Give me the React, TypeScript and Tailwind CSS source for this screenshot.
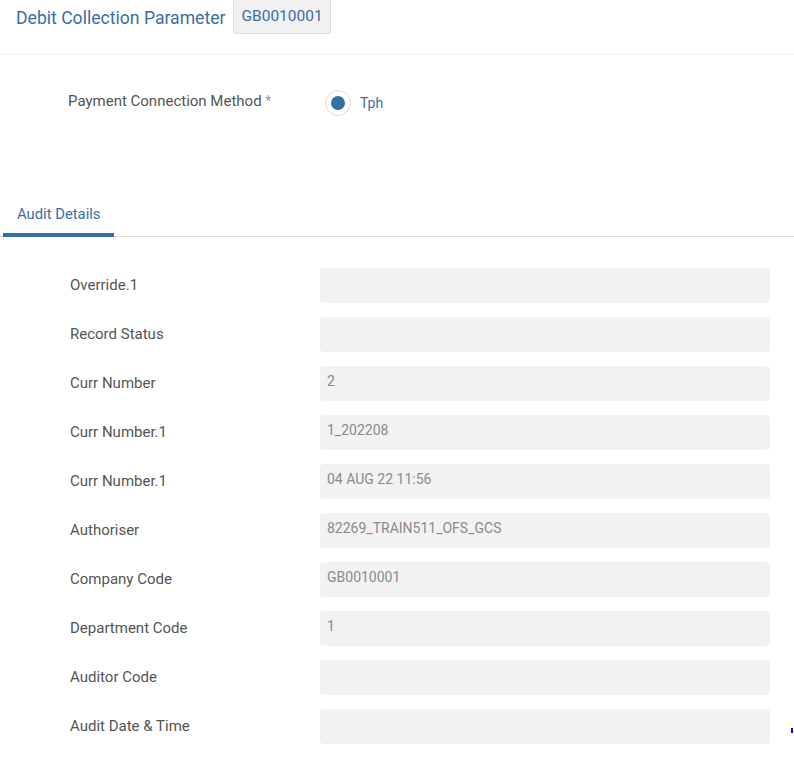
import React from 'react';

const rows: { label: string; value: string }[] = [
  { label: 'Override.1', value: '' },
  { label: 'Record Status', value: '' },
  { label: 'Curr Number', value: '2' },
  { label: 'Curr Number.1', value: '1_202208' },
  { label: 'Curr Number.1', value: '04 AUG 22 11:56' },
  { label: 'Authoriser', value: '82269_TRAIN511_OFS_GCS' },
  { label: 'Company Code', value: 'GB0010001' },
  { label: 'Department Code', value: '1' },
  { label: 'Auditor Code', value: '' },
  { label: 'Audit Date & Time', value: '' },
];

export default function App() {
  return (
    <div className="w-[794px] h-[758px] bg-white overflow-hidden font-['Roboto',sans-serif] relative">
      <header className="h-[55px] border-b border-[#eeeeee] flex items-start pl-4">
        <h1 className="text-[17.6px] text-[#3a6ea5] mt-[6px] leading-[24px]">Debit Collection Parameter</h1>
        <div className="ml-[8px] h-[34px] px-[7px] bg-[#f1f1f1] border border-[#dddddd] border-t-0 rounded-b-[3px] flex items-center text-[15.5px] text-[#3a6ea5]">
          GB0010001
        </div>
      </header>

      <div className="flex items-center pl-[68px] mt-[35px] h-[26px]">
        <span className="w-[257px] text-[15px] text-[#555555] -mt-[3px]">
          Payment Connection Method <span className="text-[#999999] text-[14px]">*</span>
        </span>
        <span className="w-[26px] h-[26px] rounded-full border border-[#dddddd] flex items-center justify-center">
          <span className="w-[14px] h-[14px] rounded-full bg-[#336ea5]" />
        </span>
        <span className="ml-[9px] text-[14px] text-[#3a6ea5]">Tph</span>
      </div>

      <div className="mt-[84px] border-b border-[#dddddd] flex pl-[3px]">
        <div className="w-[111px] h-[37px] border-b-4 border-[#336ea5] flex items-start pl-[14px] pt-[3px] -mb-px">
          <span className="text-[14.8px] text-[#3a6ea5] leading-[22px]">Audit Details</span>
        </div>
      </div>

      <div className="flex flex-col gap-[14px] mt-[31px] pl-[70px]">
        {rows.map((r, i) => (
          <div key={i} className="flex items-center h-[35px]">
            <span className="w-[250px] text-[15px] text-[#555555]">{r.label}</span>
            <div className="w-[450px] h-[35px] rounded-[4px] bg-[#f2f2f2] px-[7px] pt-[5px] text-[14px] text-[#8a8a8a] leading-[20px]">
              {r.value}
            </div>
          </div>
        ))}
      </div>

      <span className="absolute left-[791px] top-[728px] w-[2px] h-[5px] bg-[#0000ff]" />
    </div>
  );
}
